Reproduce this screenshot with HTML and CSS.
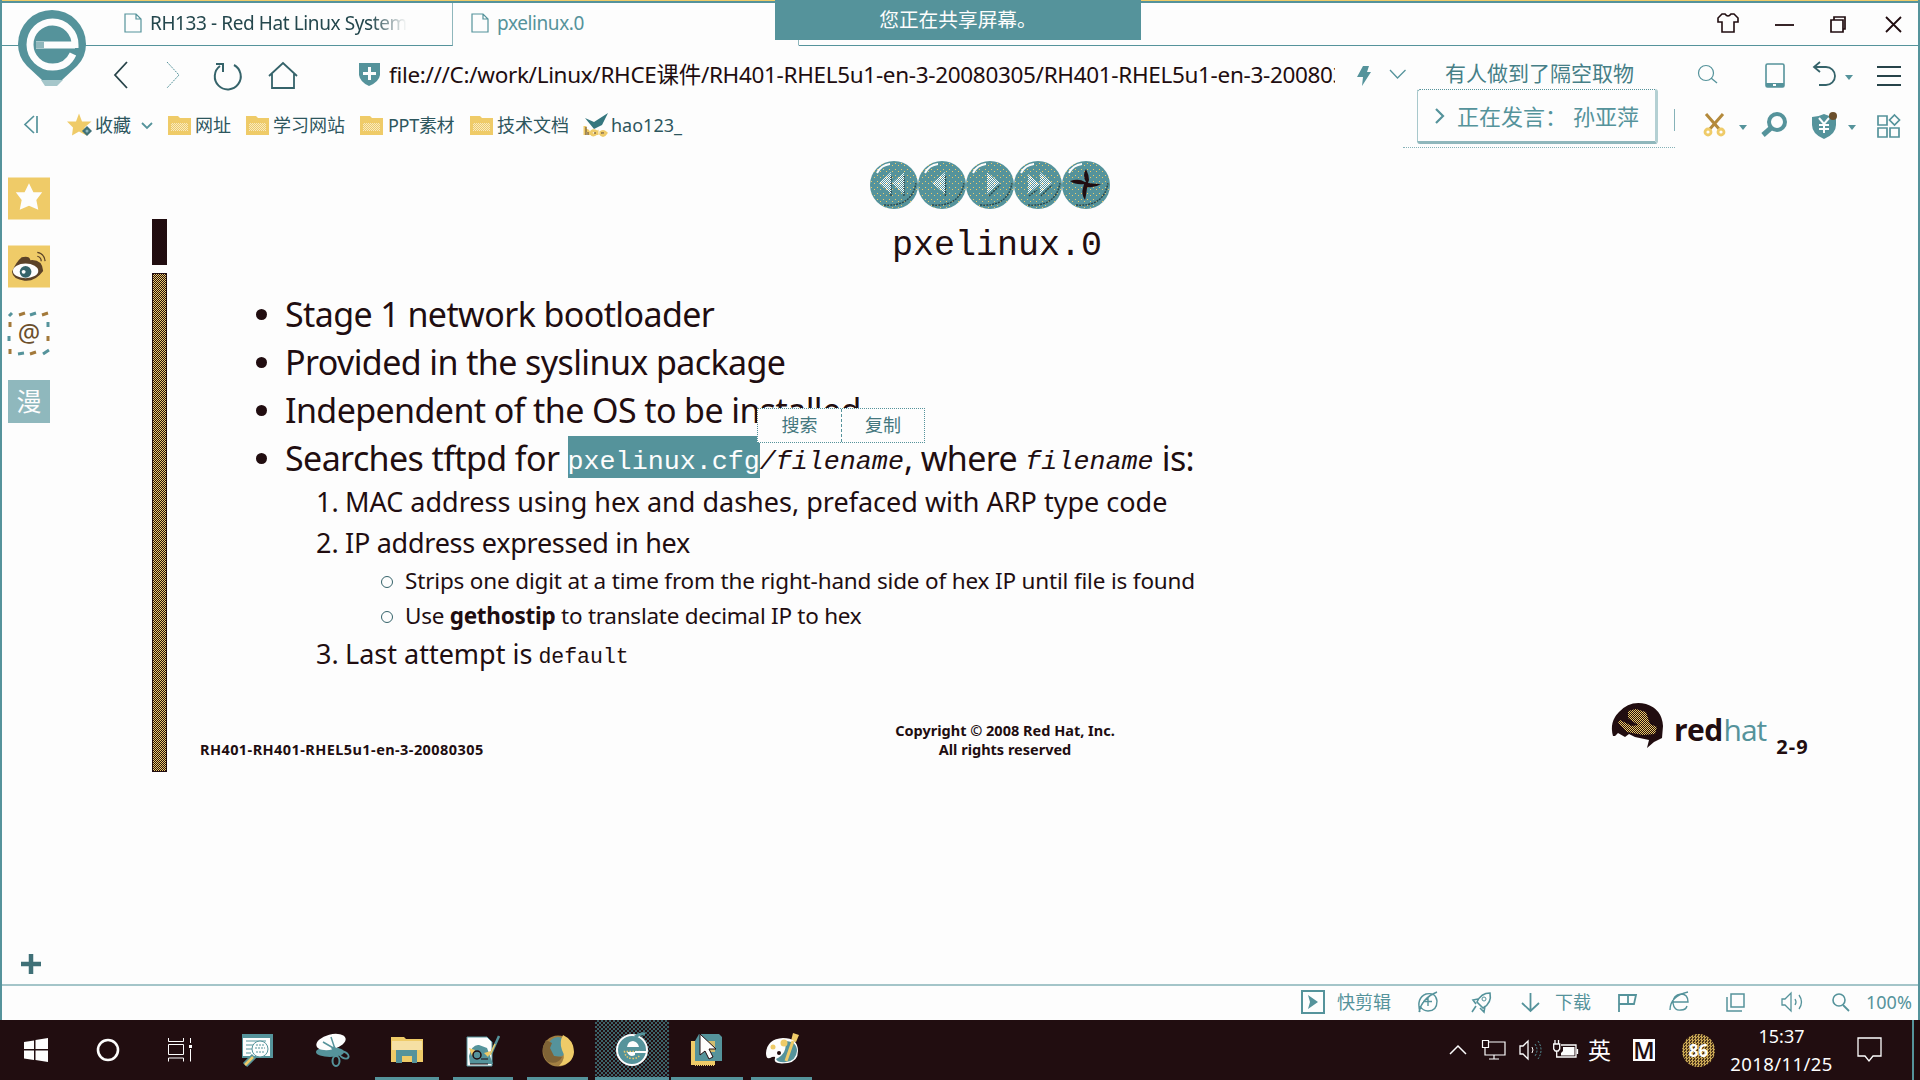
FILE: index.html
```html
<!DOCTYPE html>
<html lang="zh-CN">
<head>
<meta charset="utf-8">
<title>pxelinux.0</title>
<link rel="stylesheet" href="styles.css">
</head>
<body>
<svg class="defs" width="0" height="0">
  <defs>
    <pattern id="dy" width="2" height="2" patternUnits="userSpaceOnUse"><rect width="1" height="1" fill="#efcb68"/><rect x="1" y="1" width="1" height="1" fill="#efcb68"/></pattern>
    <pattern id="dw" width="2" height="2" patternUnits="userSpaceOnUse"><rect width="1" height="1" fill="#fdfdfd"/><rect x="1" y="1" width="1" height="1" fill="#fdfdfd"/></pattern>
    <pattern id="sp" width="6" height="6" patternUnits="userSpaceOnUse"><rect x="1" y="1" width="1" height="1" fill="#efcb68"/><rect x="4" y="3" width="1" height="1" fill="#efcb68"/></pattern>
    <symbol id="folder" viewBox="0 0 23 20"><path d="M0 1h10l2 2h11v17H0z" fill="#efcb68"/><path d="M3 8h17v8H3z" fill="url(#dw)" opacity=".6"/></symbol>
    <symbol id="page" viewBox="0 0 18 20"><path d="M1 1h11l5 5v13H1zM12 1v5h5" fill="none" stroke="#55939b" stroke-width="1.2"/></symbol>
    <symbol id="caret" viewBox="0 0 8 5"><path d="M0 0h8L4 5z" fill="#55939b"/></symbol>
  </defs>
</svg>
<div class="window">
  <header class="tabs">
    <div class="tab"><svg width="18" height="20"><use href="#page"/></svg><span class="fit fade">RH133 - Red Hat Linux System</span></div>
    <div class="tab active"><svg width="18" height="20"><use href="#page"/></svg><span class="fit">pxelinux.0</span><svg class="tabx" width="12" height="14" viewBox="0 0 12 14"><path d="M1 2l10 10M11 2L1 12" stroke="#55939b" stroke-width="2"/></svg></div>
    <div class="winbtns">
      <svg width="24" height="24" viewBox="1716 11 24 24"><path d="M1722 14h3q3 4 6 0h3l4 4v4h-4v10h-12V22h-4v-4z" fill="none" stroke="#210d10" stroke-width="1.6"/></svg>
      <svg width="20" height="24" viewBox="1775 11 20 24"><path d="M1775 25h19" stroke="#210d10" stroke-width="1.8"/></svg>
      <svg width="18" height="24" viewBox="1829 11 18 24"><path d="M1831 20h12v12h-12zM1834 20v-3h11v12h-2" fill="none" stroke="#210d10" stroke-width="1.7"/></svg>
      <svg width="18" height="24" viewBox="1885 11 18 24"><path d="M1886 17l15 15M1901 17l-15 15" stroke="#210d10" stroke-width="1.8"/></svg>
    </div>
  </header>

  <nav class="navbar">
    <svg width="20" height="30" viewBox="112 60 20 30"><path d="M127 62l-12 13 12 13" fill="none" stroke="#274349" stroke-width="1.8"/></svg>
    <svg width="20" height="30" viewBox="165 60 20 30"><path d="M167 62l12 13-12 13" fill="none" stroke="#55939b" stroke-width="1" stroke-dasharray="2 1"/></svg>
    <svg width="32" height="30" viewBox="212 60 32 30"><path d="M220 66a13 13 0 1 0 14-1M216 64h7v8" fill="none" stroke="#35636a" stroke-width="2"/></svg>
    <svg width="32" height="30" viewBox="267 60 32 30"><path d="M269 76l14-13 14 13M272 74v14h22V74" fill="none" stroke="#35636a" stroke-width="1.8"/></svg>
    <svg width="24" height="30" viewBox="358 60 24 30"><path d="M359 63h21v12q-1 7-11 11-9-4-10-11z" fill="#55939b"/><path d="M369.500 67v13M363 73.500h13" stroke="#fdfdfd" stroke-width="3"/></svg>
    <div class="urlbox">file:///C:/work/Linux/RHCE课件/RH401-RHEL5u1-en-3-20080305/RH401-RHEL5u1-en-3-200803</div>
    <svg width="16" height="30" viewBox="1356 60 16 30"><path d="M1363 66h6l-2 6h4l-9 14 1-9h-6z" fill="#55939b"/></svg>
    <svg width="20" height="30" viewBox="1388 60 20 30"><path d="M1390 70l7.500 8 8-8" fill="none" stroke="#55939b" stroke-width="1.3"/></svg>
    <span class="query">有人做到了隔空取物</span>
    <svg width="22" height="30" viewBox="1697 60 22 30"><circle cx="1706" cy="73" r="7.500" fill="none" stroke="#55939b" stroke-width="1.200"/><path d="M1711 78l6 5" stroke="#55939b" stroke-width="1.300"/></svg>
    <svg width="22" height="30" viewBox="1764 60 22 30"><rect x="1766" y="64" width="18" height="23" rx="1.500" fill="none" stroke="#55939b" stroke-width="1.600"/><path d="M1766 83h18v4h-18z" fill="#55939b"/><path d="M1773 84h3v2h-3z" fill="#fdfdfd"/></svg>
    <svg width="26" height="30" viewBox="1812 60 26 30"><path d="M1820 62l-6 5 6 5M1814 67h12a9 9 0 0 1 0 18h-7" fill="none" stroke="#35636a" stroke-width="1.800"/></svg>
    <svg class="low" width="8" height="5"><use href="#caret"/></svg>
    <svg width="26" height="30" viewBox="1876 60 26 30"><path d="M1877 67h24M1877 76h24M1877 85h24" stroke="#274349" stroke-width="1.800"/></svg>
  </nav>

  <div class="bookmarks">
    <svg width="16" height="20" viewBox="23 116 16 20"><path d="M34 117l-9 8.500 9 8.500M37 117v17" fill="none" stroke="#55939b" stroke-width="1.700"/></svg>
    <svg width="26" height="24" viewBox="67 113 26 24"><path d="M79 113.500l3 8h9.500l-7 6 2 8-7.500-4-7 4 1-8-6-6h9z" fill="#efcb68"/><path d="M87 126l5 5-5 5-5-5z" fill="#3f7077"/><circle cx="87" cy="131" r="1.500" fill="#8fb8bd"/></svg>
    <span class="bk">收藏</span>
    <svg width="14" height="10" viewBox="140 122 14 10"><path d="M142 125l5 5 5-5" fill="none" stroke="#55939b" stroke-width="1.800"/></svg>
    <svg width="23" height="20"><use href="#folder"/></svg><span class="bk">网址</span>
    <svg width="23" height="20"><use href="#folder"/></svg><span class="bk">学习网站</span>
    <svg width="23" height="20"><use href="#folder"/></svg><span class="bk ppt">PPT素材</span>
    <svg width="23" height="20"><use href="#folder"/></svg><span class="bk">技术文档</span>
    <svg width="26" height="24" viewBox="583 114 26 24"><path d="M585 119l9 4 14-9-6 12-8 4z" fill="#35777f"/><path d="M585 127v9m0-4q4-2 4 4m8-3q-5-3-6 1 2 4 6 0v2m3-2q3-3 6 0-3 5-6 0" fill="none" stroke="#efcb68" stroke-width="3"/><path d="M586 128v8m2-3v3m6-2h2m5 0h3" stroke="#5b4228" stroke-width="1"/></svg>
    <span class="bk">hao123_</span>
    <svg width="24" height="26" viewBox="1703 112 24 26"><path d="M1706 114l14 16M1723 114l-14 16" stroke="#b48a3c" stroke-width="3"/><circle cx="1708" cy="132" r="3" fill="none" stroke="#efcb68" stroke-width="2.800"/><circle cx="1721" cy="132" r="3" fill="none" stroke="#efcb68" stroke-width="2.800"/></svg>
    <svg class="low" width="8" height="5"><use href="#caret"/></svg>
    <svg width="28" height="26" viewBox="1760 112 28 26"><circle cx="1777" cy="122" r="8" fill="none" stroke="#55939b" stroke-width="4"/><path d="M1771 128l-8 7" stroke="#55939b" stroke-width="5"/></svg>
    <svg width="28" height="28" viewBox="1811 110 28 28"><path d="M1812 116q6 0 12-3 6 3 12 3v8q0 9-12 14-12-5-12-14z" fill="#55939b"/><path d="M1819 117l5 6 5-6M1824 123v9M1819 124h10M1819 128h10" stroke="#fdfdfd" stroke-width="2" fill="none"/><circle cx="1833" cy="115" r="4" fill="#6b4f2c"/></svg>
    <svg class="low" width="8" height="5"><use href="#caret"/></svg>
    <svg width="24" height="24" viewBox="1877 114 24 24"><path d="M1878 117h9v9h-9zM1878 129h9v9h-9zM1890 129h9v9h-9zM1894.500 116l5 5-5 5-5-5z" fill="none" stroke="#55939b" stroke-width="1.700"/></svg>
  </div>

  <main class="content">
    <aside class="side">
      <svg width="42" height="43" viewBox="0 0 43 43"><path d="M0 0h43v43H0z" fill="#efcb68"/><path d="M21.500 6l4.500 9h9l-6 8 2 10-9.500-4-9.500 4 2-10-6-8h9z" fill="#fdfdfd"/></svg>
      <svg width="42" height="43" viewBox="0 0 43 43"><path d="M0 0h43v43H0z" fill="#efcb68"/><path d="M4 27Q8 17 14 12q8-2 9 3 12-1 13 11-8 11-19 10-12-1-13-9z" fill="#5b4228"/><ellipse cx="18" cy="26" rx="13" ry="7.500" fill="#fdfdfd"/><circle cx="18" cy="27" r="6" fill="#35636a"/><circle cx="16" cy="27" r="2" fill="#fdfdfd"/><path d="M30 7q7 1 8 9M30 11q4 1 4 5" stroke="#5b4228" stroke-width="1.300" fill="none"/></svg>
      <div class="mail"><svg width="42" height="43" viewBox="0 0 42 43"><g stroke="#55939b" stroke-width="3"><path d="M1 4l3-3M22 3l6-2M40 14v-4M1 29v-5M10 42l6-1M35 42l6-4M40 15v-4"/></g><g stroke="#a3793a" stroke-width="3"><path d="M11 3l6-2M34 3l6-2M2 15v-5M40 29v-5M22 42l6-2M2 42v-5"/></g></svg><span>@</span></div>
      <div class="man">漫</div>
      <svg class="plus" width="20" height="20" viewBox="0 0 20 20"><path d="M10 0v20M0 10h20" stroke="#3f7077" stroke-width="4.500"/></svg>
    </aside>
    <div class="bars"><i class="b1"></i><i class="b2"></i></div>
    <article class="slide">
      <div class="head">
        <svg width="242" height="50" viewBox="869 160 242 50">
          <g fill="#55939b"><circle cx="894" cy="185" r="24"/><circle cx="942" cy="185" r="24"/><circle cx="990" cy="185" r="24"/><circle cx="1038" cy="185" r="24"/><circle cx="1086" cy="185" r="24"/></g>
          <g fill="url(#sp)"><circle cx="894" cy="185" r="24"/><circle cx="942" cy="185" r="24"/><circle cx="990" cy="185" r="24"/><circle cx="1038" cy="185" r="24"/><circle cx="1086" cy="185" r="24"/></g>
          <g fill="none" stroke="#2a4a50" stroke-width="1.500" stroke-dasharray="2 1"><path d="M884 205q28 2 32-22M932 205q28 2 32-22M980 205q28 2 32-22M1028 205q28 2 32-22M1076 205q28 2 32-22"/><path d="M891 176v20M904 176v20M945.500 176v20M989 196l11-11M1029 196l8-6M1041 196l11-11"/></g>
          <g fill="none" stroke="#fdfdfd" stroke-width="2"><path d="M877 173q4-8 13-9M925 173q4-8 13-9M973 173q4-8 13-9M1021 173q4-8 13-9M1069 173q4-8 13-9"/></g>
          <g fill="url(#dw)"><path d="M891 172v22l-12-11zM904 172v22l-12-11zM945 172v22l-13-11zM987 172v22l13-11zM1028 174v20l12-10zM1040 172v22l12-11z"/></g>
          <path d="M1086 182q-4-7 0-13 3 6 3 11l-1 3q7 1 13 1-6 4-13 3l-1 1q-1 8-2 12-4-6-2-12l1-4q-8 1-14-3 9-3 15 1z" fill="#210d10"/>
        </svg>
        <h1>pxelinux.0</h1>
      </div>
      <ul class="l1">
        <li><span class="a">Stage 1 network bootloader</span></li>
        <li><span class="a">Provided in the syslinux package</span></li>
        <li><span class="a">Independent of the OS to be installed</span></li>
        <li><span class="a">Searches tftpd for&nbsp;</span><code class="sel">pxelinux.cfg</code><code class="it">/filename</code><span class="a">, where&nbsp;</span><code class="it">filename</code><span class="a">&nbsp;is:</span></li>
      </ul>
      <ol class="l2">
        <li><i>1.</i><span>MAC address using hex and dashes, prefaced with ARP type code</span></li>
        <li><i>2.</i><span class="tight">IP address expressed in hex</span></li>
      </ol>
      <ul class="l3">
        <li><span>Strips one digit at a time from the right-hand side of hex IP until file is found</span></li>
        <li><span class="tight">Use <b>gethostip</b> to translate decimal IP to hex</span></li>
      </ul>
      <ol class="l2 last">
        <li><i>3.</i><span>Last attempt is&nbsp;</span><code>default</code></li>
      </ol>
      <footer class="foot">
        <span class="f1">RH401-RH401-RHEL5u1-en-3-20080305</span>
        <p>Copyright © 2008 Red Hat, Inc.<br>All rights reserved</p>
        <div class="rh">
          <svg width="54" height="48" viewBox="1610 701 54 48"><path d="M1613 736q-4-14 6-24 11-12 27-8 16 5 17 22l-1 12-8 4-7 6 2-8-14-3-6-3-4 3-7-4-3 3z" fill="#210d10"/><path d="M1628 711l8-2 10 3 4 12 7 3-2 7-12 1-16-3-9-9 2-3 12 6 6-1-10-7z" fill="url(#dy)"/></svg>
          <span class="red">red</span><span class="hat">hat</span><span class="num">2-9</span>
        </div>
      </footer>
    </article>
  </main>

  <div class="status">
    <svg width="26" height="26" viewBox="1300 989 26 26"><rect x="1302" y="991" width="22" height="22" fill="none" stroke="#55939b" stroke-width="2"/><path d="M1308 995l10 7-10 7 2-7z" fill="#55939b"/></svg>
    <span>快剪辑</span>
    <svg width="22" height="24" viewBox="1417 990 22 24"><path d="M1420 1012q-4-14 6-18 10-2 11 7 0 10-9 10-5 0-8-5M1419 1012q3-14 18-20M1428 997v9M1423 1001.500h9" fill="none" stroke="#55939b" stroke-width="1.400"/></svg>
    <svg width="22" height="24" viewBox="1471 990 22 24"><path d="M1490 993q-9 0-13 9l6 6q9-5 7-15zM1478 999l-5 1 3 4M1485 1006l-1 6-4-4M1476 1006l-4 6" fill="none" stroke="#55939b" stroke-width="1.600"/><circle cx="1484" cy="999" r="2" fill="none" stroke="#55939b"/></svg>
    <svg width="22" height="24" viewBox="1520 990 22 24"><path d="M1530.500 993v17M1522 1003l8.500 8 8.500-8" fill="none" stroke="#55939b" stroke-width="1.800"/></svg>
    <span>下载</span>
    <svg width="22" height="24" viewBox="1617 990 22 24"><path d="M1619 1012v-17h17l-2 9h-15M1628 995v9" fill="none" stroke="#55939b" stroke-width="1.800"/></svg>
    <svg width="24" height="24" viewBox="1670 990 24 24"><path d="M1674 1002h15q0-8-7-8-8 1-8 9 1 8 8 7 5 0 6-4M1671 1010q0-14 18-18" fill="none" stroke="#55939b" stroke-width="1.400"/></svg>
    <svg width="22" height="24" viewBox="1725 990 22 24"><path d="M1731 994h13v13h-13zM1727 997v14h15" fill="none" stroke="#55939b" stroke-width="1.500"/></svg>
    <svg width="24" height="24" viewBox="1780 990 24 24"><path d="M1782 999h3l6-6v18l-6-6h-3zM1795 999q2 3 0 6M1799 995q5 7 0 14" fill="none" stroke="#55939b" stroke-width="1.300"/></svg>
    <svg width="20" height="24" viewBox="1831 990 20 24"><circle cx="1839" cy="1000" r="6" fill="none" stroke="#55939b" stroke-width="1.600"/><path d="M1843 1005l6 6" stroke="#55939b" stroke-width="1.800"/></svg>
    <span>100%</span>
  </div>
</div>

<div class="taskbar">
  <div class="app"><svg width="24" height="24" viewBox="0 0 24 24" fill="#fdfdfd"><path d="M0 4l10-1.500V11H0zM11.500 2L24 0v11H11.500zM0 12.500h10V22L0 20.500zM11.500 12.500H24V24l-12.500-2z"/></svg></div>
  <div class="app"><svg width="24" height="24"><circle cx="12" cy="12" r="10" fill="none" stroke="#fdfdfd" stroke-width="2.600"/></svg></div>
  <div class="app"><svg width="24" height="24" viewBox="0 0 24 24"><path d="M.5 0v3.500h15V0M.5 6.500h15v10H.5zM.5 23.500V20h15v3.500M22.500 0v5M22.500 11v12.500" fill="none" stroke="#fdfdfd"/><path d="M21 7h3v3h-3z" fill="#fdfdfd"/></svg></div>
  <div class="app"><svg width="31" height="33" viewBox="0 0 31 33"><path d="M0 0h31v24H0z" fill="#55939b"/><path d="M1 4h27v18H1z" fill="#fdfdfd"/><path d="M4 7h20M4 11h8M4 15h6M4 19h5" stroke="#55939b"/><circle cx="18" cy="15" r="8" fill="#fdfdfd" stroke="#55939b"/><path d="M13 14h10M14 11h8M14 18h8" stroke="#55939b" stroke-dasharray="2 1"/><path d="M12 22l-9 9" stroke="#55939b" stroke-width="6"/><path d="M11 23l-8 8" stroke="#efcb68" stroke-width="2.500"/></svg></div>
  <div class="app"><svg width="34" height="34" viewBox="0 0 34 34"><ellipse cx="14" cy="19" rx="14" ry="5" fill="#55939b"/><ellipse cx="15" cy="9" rx="15" ry="7.500" fill="#fdfdfd" transform="rotate(-14 15 9)"/><path d="M15 4l4 12-12-7" fill="none" stroke="#55939b" stroke-width="1.500"/><path d="M17 14l4 8M20 16l5 4" stroke="#55939b" stroke-width="4"/><ellipse cx="20" cy="28" rx="3.500" ry="5" fill="none" stroke="#55939b" stroke-width="2"/><ellipse cx="28" cy="22" rx="5" ry="3" fill="none" stroke="#55939b" stroke-width="2" transform="rotate(30 28 22)"/></svg></div>
  <div class="app run"><svg width="32" height="28" viewBox="0 0 32 28"><path d="M0 1h13l2 2h17v23H0z" fill="#efcb68"/><path d="M1 5h30v9H1z" fill="#f6e0a4"/><path d="M5 27V14h21v13h-5v-7H11v7z" fill="#55939b"/></svg></div>
  <div class="app run"><svg width="34" height="33" viewBox="0 0 34 33"><path d="M1 3h20l5 5v24H1z" fill="#fdfdfd" stroke="#55939b"/><path d="M3 22q3-12 10-11l8 3 6 16H4z" fill="#55939b"/><path d="M3 14l6 2-3 6zM18 19l7-2-3 6z" fill="#efcb68"/><circle cx="11" cy="21" r="4" fill="none" stroke="#210d10" stroke-width="1.500"/><path d="M4 30h18M15 25h7" stroke="#210d10" stroke-width="1.200"/><path d="M33 2l-8 18" stroke="#55939b" stroke-width="2.500"/><path d="M29 10l-5 11" stroke="#efcb68" stroke-width="1.500"/></svg></div>
  <div class="app run"><svg width="32" height="33" viewBox="0 0 32 33"><circle cx="16" cy="17" r="15.500" fill="#a27f42"/><circle cx="16" cy="13" r="10" fill="#55939b"/><path d="M21 1q11 5 11 17-1 12-15 14 8-8 3-16-3-8 1-15z" fill="#efcb68"/><path d="M1 13q2-5 3-7l6 3-2 5 4 8 8 1q-4 8-14 5Q0 22 1 13z" fill="#7f6336"/></svg></div>
  <div class="app run cur"><svg width="34" height="34" viewBox="0 0 34 34"><circle cx="17" cy="17" r="15" fill="#55939b" stroke="#fdfdfd" stroke-width="2"/><path d="M25 18.500H9.500q1 7 8 7 5 0 7-3" fill="none" stroke="#efcb68" stroke-width="1.500" stroke-dasharray="1.500 1.500"/><path d="M12 14q1-6 6-6 5 1 6 6zM12 19h8v3q-5 3-8-3zM20 18h12v2H20z" fill="#fdfdfd"/><path d="M20 4q5-4 10-3" stroke="#55939b" stroke-width="3" fill="none"/></svg></div>
  <div class="app run wide"><svg width="32" height="34" viewBox="0 0 32 34"><path d="M0 8h24v24H0z" fill="#efcb68"/><path d="M4 29h20v4H4z" fill="url(#dy)"/><path d="M8 1h20l3 3v24H4V8z" fill="#55939b"/><path d="M16 8h8v11h-8z" fill="#d2bd70"/></svg></div>
  <div class="app run"><svg width="34" height="34" viewBox="0 0 34 34"><path d="M28 0l6 2-3 7-5-1z" fill="#efcb68"/><path d="M1 20Q2 6 18 5q15 0 15 13 0 10-10 12-16 2-13-5 1-2-3-1-6 4-6-4z" fill="#fdfdfd"/><path d="M20 8q12 0 12 10-1 10-11 11-8 1-10-3 12-6 9-18z" fill="#55939b"/><circle cx="19" cy="10" r="3.500" fill="#efcb68"/><circle cx="8" cy="14" r="2.500" fill="#efcb68"/><circle cx="14" cy="20" r="2" fill="#210d10"/><path d="M28 8l-7 20" stroke="#efcb68" stroke-width="3"/></svg></div>

  <div class="tray">
    <svg width="18" height="12" viewBox="0 0 18 12"><path d="M1 10l8-8 8 8" fill="none" stroke="#fdfdfd" stroke-width="1.500"/></svg>
    <svg width="24" height="20" viewBox="0 0 24 20"><path d="M6 2h17v13H3V10M12 15v4M7 19h10M.5.500h6v7h-6zM3 8v4" fill="none" stroke="#fdfdfd" stroke-width="1.200"/></svg>
    <svg width="24" height="20" viewBox="0 0 24 20"><path d="M1 6h3l5-5v18l-5-5H1z" fill="none" stroke="#fdfdfd" stroke-width="1.300"/><path d="M13 7q2 3 0 6" fill="none" stroke="#fdfdfd"/><path d="M16 4q4 6 0 12M19 1q6 9 0 18" fill="none" stroke="#55939b" stroke-dasharray="2 1.500"/></svg>
    <svg width="26" height="20" viewBox="0 0 26 20"><path d="M8 5h15v12H7M24.500 9v5" fill="none" stroke="#fdfdfd" stroke-width="1.300"/><path d="M10 7h11.500v8.500H8V13l2-2z" fill="#fdfdfd"/><path d="M.7 4h6v5l-1.500 2H2.200L.7 9zM2 0v4M5.500 0v4M3.700 11v6H7" fill="none" stroke="#fdfdfd" stroke-width="1.300"/></svg>
    <span class="ying">英</span>
    <span class="m">M</span>
    <span class="ball">86</span>
    <div class="clock"><span>15:37</span><span class="date">2018/11/25</span></div>
    <svg width="25" height="26" viewBox="0 0 25 26"><path d="M1 1h23v18h-8l-4 5-4-5H1z" fill="none" stroke="#fdfdfd" stroke-width="1.300"/></svg>
    <i class="peek"></i>
  </div>
</div>

<svg class="logo" width="70" height="80" viewBox="17 9 70 80"><path d="M52 10a34 34 0 0 1 34 34q0 13-9 22L62 80H42L27 66Q18 57 18 44a34 34 0 0 1 34-34z" fill="#55939b"/><path d="M41 80h22l-6 6H45z" fill="#a5c6ca"/><path d="M75 45H36M73 54q-6 13-20 13A22.500 22.500 0 1 1 75 45v3" fill="none" stroke="#fdfdfd" stroke-width="7"/><path d="M36 42h8v6h-8z" fill="#8fb7bc"/></svg>
<div class="banner">您正在共享屏幕。</div>
<div class="speaker"><svg width="12" height="18" viewBox="0 0 12 18"><path d="M2 2l7 7-7 7" fill="none" stroke="#55939b" stroke-width="2.200"/></svg><span>正在发言：</span><span>孙亚萍</span></div>
<div class="popup"><span>搜索</span><span>复制</span></div>
<svg class="cursor" width="22" height="30" viewBox="0 0 22 30"><path d="M2 2v21l5-4 4 8 4-2-4-8h7z" fill="#fdfdfd" stroke="#210d10"/></svg>
</body>
</html>
```
FILE: styles.css
```css
* { box-sizing: border-box; }
:root { --teal: #55939b; --ink: #210d10; --gold: #efcb68; --paper: #fdfdfd; --soft: #8fb7bc; }
body {
  margin: 0; width: 1920px; height: 1080px; overflow: hidden; position: relative;
  background: var(--paper); color: var(--ink);
  font-family: "Noto Sans", "Noto Sans CJK SC", sans-serif;
  display: flex; flex-direction: column;
}
svg { display: block; flex: none; overflow: visible; }
.defs { position: absolute; }
i { font-style: normal; }

.window {
  height: 1020px; display: flex; flex-direction: column;
  box-shadow: inset 2px 0 var(--teal), inset -2px 0 var(--teal), inset 0 1px var(--gold), inset 0 3px var(--teal);
}

/* tab strip */
.tabs { height: 46px; display: grid; grid-template-columns: 453px 346px 1fr; font-size: 19px; line-height: 26px; }
.tab { display: flex; align-items: flex-start; gap: 8px; padding: 7px 0 0 124px; color: #24474d; border-right: 1px solid var(--soft); border-bottom: 1px solid var(--teal); margin-top: 3px; }
.tab span { white-space: nowrap; letter-spacing: -.4px; }
.tab svg { margin-top: 3px; }
.tab.active { color: var(--teal); padding-left: 18px; border-bottom-color: transparent; }
.tab.active .tabx { margin: 8px 0 0 190px; }
.fade { -webkit-mask-image: linear-gradient(90deg, #000 86%, transparent); mask-image: linear-gradient(90deg, #000 86%, transparent); }
.winbtns { border-bottom: 1px solid var(--teal); display: grid; grid-template-columns: 59px 54px 56px 1fr; padding: 11px 0 0 917px; }

/* address row */
.navbar {
  height: 58px; display: grid; align-items: center; padding-left: 112px;
  grid-template-columns: 53px 47px 55px 91px 31px 967px 32px 57px 252px 67px 48px 33px 31px 1fr;
}
.urlbox { width: 946px; overflow: hidden; font-size: 22.500px; line-height: 32px; letter-spacing: -.32px; white-space: nowrap; }
.query { font-size: 21px; line-height: 30px; color: #467f87; white-space: nowrap; margin-top: -5px; }
.low { align-self: center; margin-top: 4px; }

/* bookmark row */
.bookmarks {
  height: 42px; display: grid; align-items: center; padding-left: 23px; font-size: 18px; line-height: 26px;
  grid-template-columns: 44px 28px 45px 28px 27px 51px 27px 87px 28px 82px 27px 86px 28px 1092px 36px 21px 51px 37px 29px 1fr;
}
.bk { color: #2d565d; white-space: nowrap; }
.ppt { letter-spacing: -.3px; }

/* page area */
.content { height: 840px; display: grid; grid-template-columns: 152px 15px 1fr; border-bottom: 2px solid #a4c5c9; margin: 0 2px; width: 1916px; }
.side { padding: 31px 0 10px 6px; display: flex; flex-direction: column; gap: 24.500px; }
.mail { width: 42px; height: 43px; display: grid; text-align: center; font-size: 25px; line-height: 40px; color: #6b4f2c; }
.mail > * { grid-area: 1 / 1; }
.man { width: 42px; height: 43px; background: #8fb8bd; color: var(--paper); text-align: center; font-size: 25px; line-height: 42px; }
.plus { margin: auto 0 0 13px; }
.bars { display: flex; flex-direction: column; gap: 8px; padding-top: 73px; margin-left: -2px; }
.b1 { height: 46px; width: 15px; background: var(--ink); }
.b2 { height: 499px; width: 15px; border: 1px solid var(--ink); background: repeating-conic-gradient(var(--gold) 0 25%, var(--ink) 0 50%) 0 0 / 2px 2px; }

/* slide */
.slide { padding-top: 14px; margin-left: -2px; }
.head { height: 130px; width: 242px; margin-left: 702px; display: flex; flex-direction: column; }
h1 { margin: 10px 0 0 23px; font: 400 35px/52px "Liberation Mono", monospace; white-space: nowrap; }
ul, ol { list-style: none; margin: 0; padding: 0; }
li { display: flex; white-space: nowrap; align-items: baseline; }
code { font-family: "Liberation Mono", monospace; margin-bottom: 2px; transform: translateY(-2px); }
.l1 { padding-left: 118px; font-size: 34px; line-height: 48px; }
.l1 li { height: 48px; }
.l1 li::before { content: ""; width: 11px; height: 11px; border-radius: 50%; background: var(--ink); margin: 1px 18px 0 -29px; align-self: center; flex: none; }
.a { letter-spacing: -.6px; }
.l1 code { font-size: 26.700px; line-height: 32px; }
.l1 .sel { background: var(--teal); color: var(--paper); padding-top: 10px; }
.it { font-style: italic; }
.l2 { padding-left: 149px; margin-top: -1px; font-size: 27px; line-height: 41px; }
.l2.last { margin-top: 0; }
.l2 li { height: 41px; }
.l2 i { width: 29px; flex: none; }
.l2 code { font-size: 21.500px; transform: translateY(-1px); margin-left: -1px; }
.tight { letter-spacing: -.26px; }
.l3 { padding-left: 238px; font-size: 22.500px; line-height: 35px; letter-spacing: -.17px; }
.l3 li { height: 35px; }
.l3 li::before { content: ""; width: 10px; height: 10px; border: 1px solid #35636a; border-radius: 50%; margin: 2px 12px 0 -24px; align-self: center; flex: none; }
.foot { display: grid; grid-template-columns: 604px 802px 1fr; margin: 47px 0 0 33px; font-size: 14.500px; font-weight: 700; line-height: 19px; }
.f1 { margin-top: 19px; letter-spacing: .42px; white-space: nowrap; }
.foot p { margin: 0; width: 402px; text-align: center; }
.rh { display: flex; margin: -20px 0 0 4px; align-items: flex-start; }
.rh span { white-space: nowrap; }
.red { font: 700 30px/40px "Open Sans", sans-serif; margin: 9px 0 0 10px; letter-spacing: -.6px; }
.hat { font: 400 30px/40px "Open Sans", sans-serif; color: var(--teal); margin: 9px 0 0 1px; letter-spacing: -1px; }
.num { font-size: 20px; line-height: 28px; letter-spacing: 1px; margin: 32px 0 0 10px; }

/* browser status row */
.status {
  flex: 1; display: grid; align-items: center; padding-left: 1300px; font-size: 18px; line-height: 26px; color: var(--teal);
  grid-template-columns: 37px 80px 54px 49px 35px 62px 52px 56px 55px 51px 35px 1fr;
}
.status > * { margin-top: -3px; }
.status span { white-space: nowrap; }

/* taskbar */
.taskbar { height: 60px; background: var(--ink); display: grid; color: var(--paper); grid-template-columns: 72px 72px 72px 82px 70px 78px 74px 75px 74px 75px 75px 1fr; }
.app { display: grid; place-items: center; position: relative; }
.run { border-bottom: 3px solid var(--teal); margin: 0 7px; padding-top: 3px; }
.cur { margin: 0; background: repeating-conic-gradient(#3c6268 0 25%, var(--ink) 0 50%) 0 0 / 4px 4px; }
.wide { margin: 0 1px 0 2px; }
.tray { display: grid; align-items: center; padding-left: 630px; grid-template-columns: 33px 37px 34px 35px 45px 49px 48px 127px 55px 1fr; }
.ying { font-size: 23px; line-height: 30px; }
.m { width: 22px; height: 22px; background: var(--paper); color: var(--ink); font-size: 23px; line-height: 22px; text-align: center; font-weight: 600; }
.ball { width: 33px; height: 33px; border-radius: 50%; background: repeating-conic-gradient(#c9a754 0 25%, #4a331c 0 50%) 0 0 / 3px 3px; font-weight: 700; font-size: 17px; line-height: 33px; text-align: center; }
.clock { width: 103px; display: flex; flex-direction: column; align-items: center; font-size: 18px; line-height: 28px; }
.date { font-size: 18.500px; letter-spacing: .4px; }
.peek { width: 2px; height: 60px; background: var(--teal); }

/* floating layers */
.logo { position: absolute; left: 17px; top: 9px; }
.banner { position: absolute; left: 775px; top: 0; width: 366px; height: 40px; background: var(--teal); color: var(--paper); font-size: 19.700px; line-height: 40px; text-align: center; }
.speaker { position: absolute; left: 1417px; top: 89px; width: 241px; height: 55px; background: var(--paper); border: 1px dotted var(--teal); border-right: 3px solid #b4d0d3; border-bottom: 3px solid var(--soft); border-radius: 3px; display: flex; align-items: center; padding-left: 16px; color: var(--teal); font-size: 22px; line-height: 44px; white-space: nowrap; }
.speaker svg { margin-right: 11px; }
.speaker span + span { margin-left: 6px; }
.speaker::after { content: ""; position: absolute; left: -15px; right: -20px; top: 12px; bottom: -7px; border-bottom: 1px dotted var(--teal); background: linear-gradient(var(--teal), var(--teal)) 100% 30% / 1px 22px no-repeat; opacity: .7; }
.popup { position: absolute; left: 757px; top: 408px; width: 168px; height: 35px; background: var(--paper); border: 1px dotted var(--teal); display: grid; grid-template-columns: 1fr 1fr; text-align: center; font-size: 18px; line-height: 33px; color: #44777e; }
.popup span + span { border-left: 1px dashed var(--teal); }
.cursor { position: absolute; left: 698px; top: 1032px; }
```
